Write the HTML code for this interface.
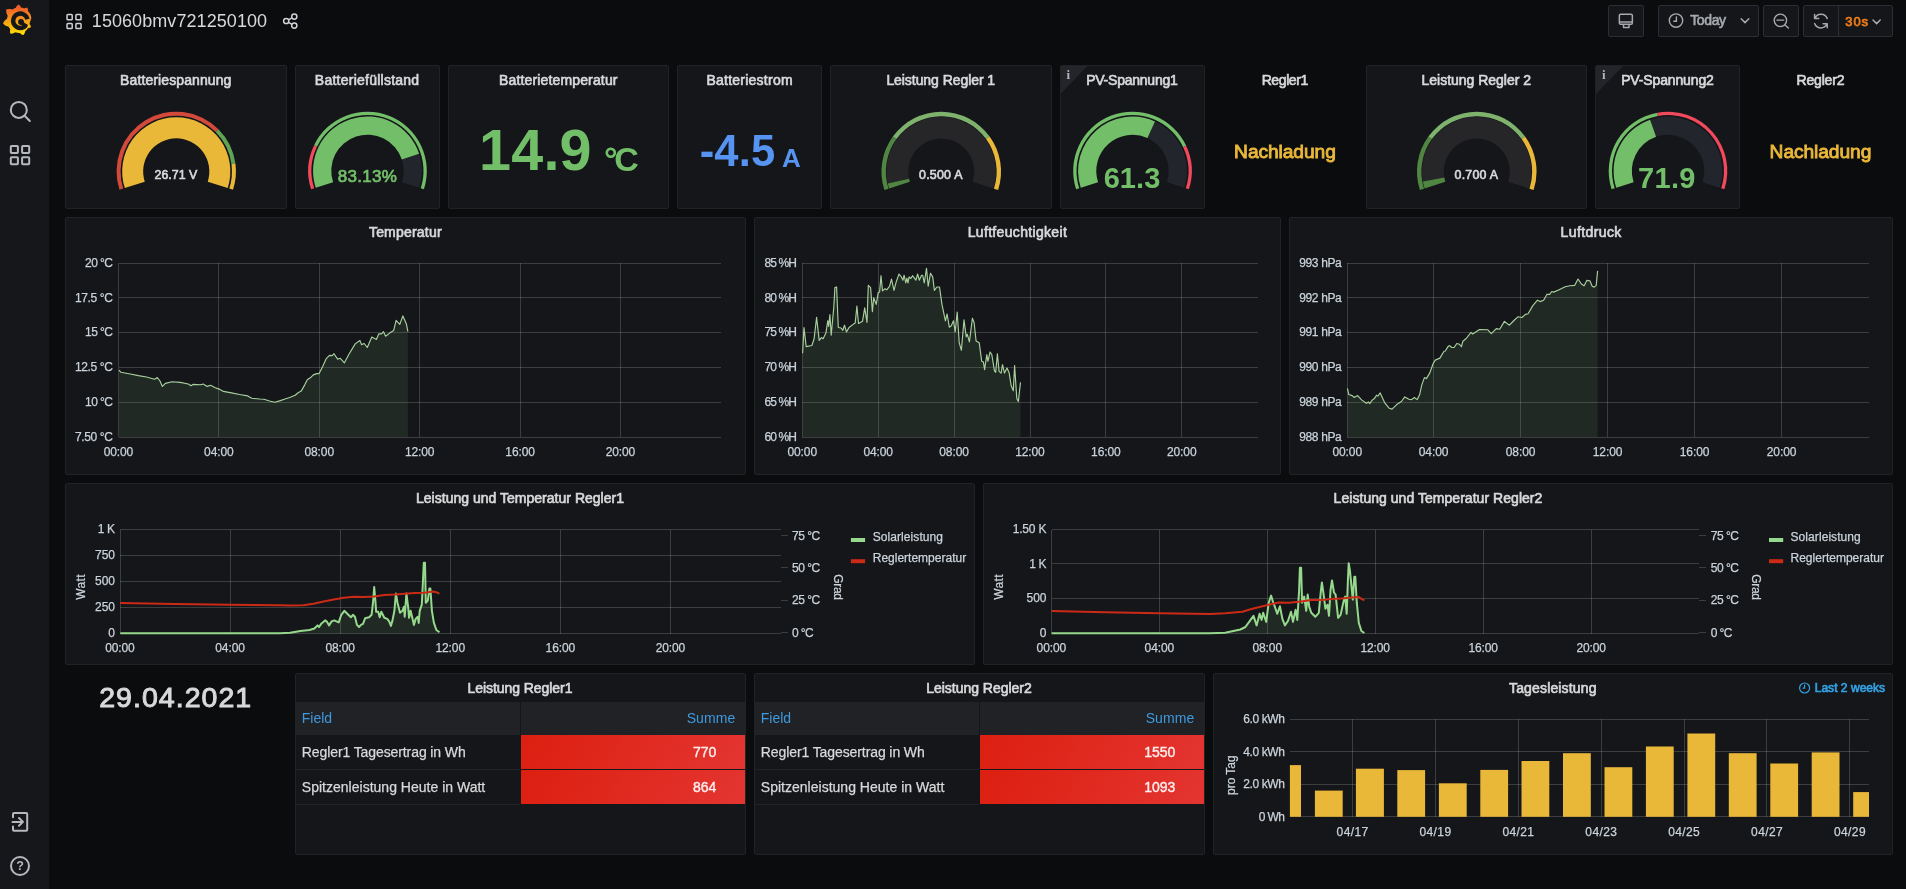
<!DOCTYPE html><html lang="de"><head><meta charset="utf-8"><title>15060bmv721250100 - Grafana</title><style>
html,body{margin:0;padding:0}
body{width:1906px;height:889px;overflow:hidden;background:#0b0c0e;font-family:"Liberation Sans",sans-serif;color:#d8d9da;position:relative}
.t{position:absolute;white-space:pre;line-height:1;display:block}
.sidemenu{position:absolute;left:0;top:0;width:49px;height:889px;background:#16171b}
.panel{position:absolute;box-sizing:border-box;background:#141619;border:1px solid #202226;border-radius:2px}
.panel.transparent{background:transparent;border-color:transparent}
.txtlayer{position:absolute;left:0;top:0;width:1906px;height:889px;will-change:transform}
.gfx{position:absolute;left:0;top:0;pointer-events:none}
.navbtn{position:absolute;top:5px;height:31.5px;box-sizing:border-box;background:#141619;border:1px solid #2c2e33;border-radius:2px}
.thead{position:absolute;background:#202226}
.cellred{position:absolute;background:linear-gradient(120deg,#dc1f10,#e43531)}
.rowline{position:absolute;height:1px;background:#202226}
</style></head><body><nav class="sidemenu"></nav><section class="panel" style="left:65.0px;top:65px;width:221.5px;height:144px"></section><section class="panel" style="left:294.5px;top:65px;width:145.0px;height:144px"></section><section class="panel" style="left:447.5px;top:65px;width:221.5px;height:144px"></section><section class="panel" style="left:677.0px;top:65px;width:145.0px;height:144px"></section><section class="panel" style="left:830.0px;top:65px;width:221.5px;height:144px"></section><section class="panel" style="left:1059.5px;top:65px;width:145.0px;height:144px"></section><section class="panel transparent" style="left:1212.5px;top:65px;width:145.0px;height:144px"></section><section class="panel" style="left:1365.5px;top:65px;width:221.5px;height:144px"></section><section class="panel" style="left:1595.0px;top:65px;width:145.0px;height:144px"></section><section class="panel transparent" style="left:1748.0px;top:65px;width:145.0px;height:144px"></section><section class="panel" style="left:65.0px;top:217px;width:680.5px;height:258px"></section><section class="panel" style="left:753.5px;top:217px;width:527.5px;height:258px"></section><section class="panel" style="left:1289.0px;top:217px;width:604.0px;height:258px"></section><section class="panel" style="left:65.0px;top:483px;width:910.0px;height:182px"></section><section class="panel" style="left:983.0px;top:483px;width:910.0px;height:182px"></section><section class="panel transparent" style="left:65.0px;top:673px;width:221.5px;height:182px"></section><section class="panel" style="left:294.5px;top:673px;width:451.0px;height:182px"></section><section class="panel" style="left:753.5px;top:673px;width:451.0px;height:182px"></section><section class="panel" style="left:1212.5px;top:673px;width:680.5px;height:182px"></section><div class="navbtn" style="left:1608.3px;width:35.4px"></div><div class="navbtn" style="left:1658.3px;width:100.5px"></div><div class="navbtn" style="left:1763.4px;width:35.3px"></div><div class="navbtn" style="left:1803.4px;width:89.4px"></div><div style="position:absolute;left:1838px;top:5px;width:1px;height:31.5px;background:#2c2e33"></div><div class="thead" style="left:295.5px;top:702px;width:449.0px;height:33px"></div><div style="position:absolute;left:520.0px;top:702px;width:1px;height:33px;background:#141619"></div><div class="cellred" style="left:520.5px;top:735.3px;width:224.0px;height:33.6px"></div><div class="rowline" style="left:295.5px;top:769.0px;width:224.5px"></div><div class="cellred" style="left:520.5px;top:770.0px;width:224.0px;height:33.6px"></div><div class="rowline" style="left:295.5px;top:803.7px;width:224.5px"></div><div class="thead" style="left:754.5px;top:702px;width:449.0px;height:33px"></div><div style="position:absolute;left:979.0px;top:702px;width:1px;height:33px;background:#141619"></div><div class="cellred" style="left:979.5px;top:735.3px;width:224.0px;height:33.6px"></div><div class="rowline" style="left:754.5px;top:769.0px;width:224.5px"></div><div class="cellred" style="left:979.5px;top:770.0px;width:224.0px;height:33.6px"></div><div class="rowline" style="left:754.5px;top:803.7px;width:224.5px"></div><svg class="gfx" width="1906" height="889" viewBox="0 0 1906 889"><defs><linearGradient id="glogo" gradientUnits="userSpaceOnUse" x1="175.5" y1="394" x2="175.5" y2="30"><stop offset="0" stop-color="#FFF100"/><stop offset="1" stop-color="#F05A28"/></linearGradient></defs><g transform="translate(2.4,4.3) scale(0.0845)"><path fill="url(#glogo)" d="M342,161.2c-0.6-6.1-1.600-13.100-3.600-20.900c-2-7.700-5-16.200-9.400-25c-4.400-8.800-10.100-17.900-17.500-26.800c-2.900-3.500-6.100-6.900-9.500-10.200c5.100-20.300-6.200-37.900-6.200-37.900c-19.500-1.200-31.900,6.100-36.500,9.400c-0.800-0.300-1.500-0.700-2.300-1c-3.300-1.300-6.700-2.600-10.300-3.700c-3.500-1.100-7.100-2.100-10.800-3c-3.700-0.900-7.400-1.600-11.200-2.200c-0.700-0.100-1.300-0.200-2-0.300c-8.500-27.200-32.900-38.600-32.900-38.600c-27.300,17.300-32.400,41.500-32.400,41.500s-0.100,0.500-0.300,1.400c-1.500,0.400-3,0.900-4.500,1.300c-2.100,0.600-4.200,1.400-6.200,2.200c-2.100,0.800-4.100,1.600-6.200,2.500c-4.100,1.800-8.200,3.800-12.200,6c-3.900,2.200-7.700,4.600-11.400,7.100c-0.500-0.200-1-0.400-1-0.400c-37.800-14.400-71.300,2.900-71.300,2.900c-3.100,40.200,15.100,65.500,18.700,70.100c-0.900,2.500-1.700,5-2.500,7.500c-2.800,9.100-4.900,18.400-6.200,28.100c-0.200,1.400-0.400,2.800-0.500,4.200c-35,17.300-45.300,52.600-45.300,52.600c29.100,33.500,63.100,35.600,63.100,35.600c0,0,0.100-0.100,0.100-0.100c4.300,7.700,9.300,15,14.900,21.900c2.400,2.900,4.800,5.600,7.400,8.300c-10.600,30.400,1.500,55.600,1.500,55.600c32.400,1.200,53.700-14.200,58.200-17.700c3.200,1.100,6.500,2.100,9.800,2.900c10,2.600,20.200,4.100,30.400,4.500c2.500,0.100,5.100,0.200,7.600,0.100l1.200,0l0.800,0l1.600,0l1.600-0.100l0,0.100c15.300,21.800,42.100,24.900,42.100,24.900c19.100-20.100,20.200-40.100,20.200-44.400l0,0c0,0,0-0.100,0-0.300c0-0.400,0-0.600,0-0.600l0,0c0-0.300,0-0.600,0-0.900c4-2.800,7.800-5.800,11.400-9.100c7.600-6.900,14.300-14.800,19.900-23.300c0.500-0.800,1-1.600,1.500-2.400c21.600,1.200,36.900-13.400,36.900-13.400c-3.600-22.500-16.400-33.500-19.100-35.600z"/></g><path d="M27.44 19.30A7.2 7.2 0 1 0 25.92 25.43" fill="none" stroke="#16171b" stroke-width="4.4"/><path d="M25.92 25.43Q24.5 25.5 21.6 22.6" fill="none" stroke="#16171b" stroke-width="3.6" stroke-linecap="round"/><circle cx="21.0" cy="22.0" r="2.9" fill="#16171b"/><circle cx="18.8" cy="109.9" r="8" fill="none" stroke="#b5b8be" stroke-width="2"/><path d="M24.6 115.8L29.8 121" stroke="#b5b8be" stroke-width="2" stroke-linecap="round"/><rect x="10.80" y="145.90" width="7.10" height="7.10" rx="0.8" fill="none" stroke="#b5b8be" stroke-width="2.0"/><rect x="10.80" y="157.20" width="7.10" height="7.10" rx="0.8" fill="none" stroke="#b5b8be" stroke-width="2.0"/><rect x="22.10" y="145.90" width="7.10" height="7.10" rx="0.8" fill="none" stroke="#b5b8be" stroke-width="2.0"/><rect x="22.10" y="157.20" width="7.10" height="7.10" rx="0.8" fill="none" stroke="#b5b8be" stroke-width="2.0"/><path d="M19 813.1H26.2Q27.2 813.1 27.2 814.1V829.7Q27.2 830.7 26.2 830.7H14Q13 830.7 13 829.7V826.5M13 817.3V814.1Q13 813.1 14 813.1H19" fill="none" stroke="#b5b8be" stroke-width="2" stroke-linecap="round"/><path d="M12.5 821.9H22.5M19 818L23 821.9L19 825.8" fill="none" stroke="#b5b8be" stroke-width="2" stroke-linecap="round" stroke-linejoin="round"/><circle cx="20" cy="866" r="9" fill="none" stroke="#b5b8be" stroke-width="2"/><rect x="67.05" y="14.55" width="5.15" height="5.15" rx="0.8" fill="none" stroke="#d0d2d6" stroke-width="1.5"/><rect x="67.05" y="23.40" width="5.15" height="5.15" rx="0.8" fill="none" stroke="#d0d2d6" stroke-width="1.5"/><rect x="75.90" y="14.55" width="5.15" height="5.15" rx="0.8" fill="none" stroke="#d0d2d6" stroke-width="1.5"/><rect x="75.90" y="23.40" width="5.15" height="5.15" rx="0.8" fill="none" stroke="#d0d2d6" stroke-width="1.5"/><g fill="none" stroke="#d0d2d6" stroke-width="1.5"><circle cx="294.3" cy="16.6" r="2.6"/><circle cx="286.2" cy="21" r="2.6"/><circle cx="294.3" cy="25.6" r="2.6"/><path d="M288.5 19.8L292 17.9M288.5 22.3L292 24.3"/></g><g fill="none" stroke="#a6a9ae" stroke-width="1.5" stroke-linejoin="round"><rect x="1619.35" y="14.3" width="13.0" height="9.9" rx="1.3"/><path d="M1619.4 21.9H1632.3M1623.5 24.6V27.4H1629V24.6"/></g><g fill="none" stroke="#a6a9ae" stroke-width="1.4" stroke-linecap="round"><circle cx="1676" cy="20.6" r="6.7"/><path d="M1676.4 17V21.3H1673.8"/></g><path d="M1741.2 18.8L1745 22.6L1748.8 18.8" fill="none" stroke="#a6a9ae" stroke-width="1.5" stroke-linecap="round" stroke-linejoin="round"/><path d="M1873 20L1876.6 23.6L1880.2 20" fill="none" stroke="#a6a9ae" stroke-width="1.5" stroke-linecap="round" stroke-linejoin="round"/><g fill="none" stroke="#a6a9ae" stroke-width="1.4" stroke-linecap="round"><circle cx="1780.4" cy="20.3" r="6.2"/><path d="M1785 24.9L1788.4 28M1776.9 20.1H1783.7"/></g><g fill="none" stroke="#a6a9ae" stroke-width="1.5" stroke-linecap="round" stroke-linejoin="round"><path d="M1827.2 18.6A6.6 6.6 0 0 0 1815 18.2M1814.6 14.4V18.5H1818.7"/><path d="M1814.6 23.6A6.6 6.6 0 0 0 1826.8 24M1827.2 27.8V23.7H1823.1"/></g><g fill="none" stroke="#33a2e5" stroke-width="1.2" stroke-linecap="round"><circle cx="1804.6" cy="688" r="5"/><path d="M1804.6 685V688.2H1803"/></g><path d="M119.47 189.85A59.70 59.70 0 0 1 218.41 129.13L215.59 131.96A55.70 55.70 0 0 0 123.28 188.61Z" fill="#d44a3a"/><path d="M218.41 129.13A59.70 59.70 0 0 1 235.44 163.62L231.48 164.14A55.70 55.70 0 0 0 215.59 131.96Z" fill="#5fa354"/><path d="M235.44 163.62A59.70 59.70 0 0 1 233.03 189.85L229.22 188.61A55.70 55.70 0 0 0 231.48 164.14Z" fill="#EAB839"/><path d="M124.80 188.12A54.10 54.10 0 1 1 227.70 188.12L207.73 181.63A33.10 33.10 0 1 0 144.77 181.63Z" fill="#EAB839"/><path d="M311.10 189.32A59.30 59.30 0 0 1 314.13 145.15L317.10 146.58A56.00 56.00 0 0 0 314.24 188.30Z" fill="#F2495C"/><path d="M314.13 145.15A59.30 59.30 0 0 1 423.90 189.32L420.76 188.30A56.00 56.00 0 0 0 317.10 146.58Z" fill="#73BF69"/><path d="M419.11 153.79A54.40 54.40 0 0 1 419.24 187.81L401.93 182.19A36.20 36.20 0 0 0 401.84 159.55Z" fill="#22252b"/><path d="M315.76 187.81A54.40 54.40 0 0 1 419.11 153.79L401.84 159.55A36.20 36.20 0 0 0 333.07 182.19Z" fill="#73BF69"/><path d="M884.38 190.08A59.80 59.80 0 0 1 892.87 136.45L896.43 139.04A55.40 55.40 0 0 0 888.56 188.72Z" fill="#508642"/><path d="M892.87 136.45A59.80 59.80 0 0 1 989.63 136.45L986.07 139.04A55.40 55.40 0 0 0 896.43 139.04Z" fill="#7EB26D"/><path d="M989.63 136.45A59.80 59.80 0 0 1 998.12 190.08L993.94 188.72A55.40 55.40 0 0 0 986.07 139.04Z" fill="#EAB839"/><path d="M887.77 183.55A54.80 54.80 0 1 1 993.37 188.53L972.63 181.80A33.00 33.00 0 1 0 909.04 178.80Z" fill="#262628"/><path d="M889.13 188.53A54.80 54.80 0 0 1 887.77 183.55L909.04 178.80A33.00 33.00 0 0 0 909.87 181.80Z" fill="#508642"/><path d="M1076.10 189.32A59.30 59.30 0 0 1 1186.16 145.75L1183.17 147.16A56.00 56.00 0 0 0 1079.24 188.30Z" fill="#73BF69"/><path d="M1186.16 145.75A59.30 59.30 0 0 1 1188.90 189.32L1185.76 188.30A56.00 56.00 0 0 0 1183.17 147.16Z" fill="#F2495C"/><path d="M1154.98 121.46A54.40 54.40 0 0 1 1184.24 187.81L1166.93 182.19A36.20 36.20 0 0 0 1147.46 138.04Z" fill="#22252b"/><path d="M1080.76 187.81A54.40 54.40 0 0 1 1154.98 121.46L1147.46 138.04A36.20 36.20 0 0 0 1098.07 182.19Z" fill="#73BF69"/><path d="M1419.88 190.08A59.80 59.80 0 0 1 1428.37 136.45L1431.93 139.04A55.40 55.40 0 0 0 1424.06 188.72Z" fill="#508642"/><path d="M1428.37 136.45A59.80 59.80 0 0 1 1525.13 136.45L1521.57 139.04A55.40 55.40 0 0 0 1431.93 139.04Z" fill="#7EB26D"/><path d="M1525.13 136.45A59.80 59.80 0 0 1 1533.62 190.08L1529.44 188.72A55.40 55.40 0 0 0 1521.57 139.04Z" fill="#EAB839"/><path d="M1422.86 181.53A54.80 54.80 0 1 1 1528.87 188.53L1508.13 181.80A33.00 33.00 0 1 0 1444.30 177.58Z" fill="#262628"/><path d="M1424.63 188.53A54.80 54.80 0 0 1 1422.86 181.53L1444.30 177.58A33.00 33.00 0 0 0 1445.37 181.80Z" fill="#508642"/><path d="M1611.60 189.32A59.30 59.30 0 0 1 1657.33 112.67L1657.92 115.91A56.00 56.00 0 0 0 1614.74 188.30Z" fill="#73BF69"/><path d="M1657.33 112.67A59.30 59.30 0 0 1 1724.40 189.32L1721.26 188.30A56.00 56.00 0 0 0 1657.92 115.91Z" fill="#F2495C"/><path d="M1650.09 119.63A54.40 54.40 0 0 1 1719.74 187.81L1702.43 182.19A36.20 36.20 0 0 0 1656.08 136.82Z" fill="#22252b"/><path d="M1616.26 187.81A54.40 54.40 0 0 1 1650.09 119.63L1656.08 136.82A36.20 36.20 0 0 0 1633.57 182.19Z" fill="#73BF69"/><path d="M1060.5 66H1087.5L1060.5 94Z" fill="#23252a"/><path d="M1596.0 66H1623.0L1596.0 94Z" fill="#23252a"/><line x1="118.5" x2="720.9" y1="263.5" y2="263.5" stroke="#c8c8c8" stroke-opacity="0.22" stroke-width="1" shape-rendering="crispEdges"/><line x1="118.5" x2="720.9" y1="297.5" y2="297.5" stroke="#c8c8c8" stroke-opacity="0.22" stroke-width="1" shape-rendering="crispEdges"/><line x1="118.5" x2="720.9" y1="332.5" y2="332.5" stroke="#c8c8c8" stroke-opacity="0.22" stroke-width="1" shape-rendering="crispEdges"/><line x1="118.5" x2="720.9" y1="367.5" y2="367.5" stroke="#c8c8c8" stroke-opacity="0.22" stroke-width="1" shape-rendering="crispEdges"/><line x1="118.5" x2="720.9" y1="402.5" y2="402.5" stroke="#c8c8c8" stroke-opacity="0.22" stroke-width="1" shape-rendering="crispEdges"/><line x1="118.5" x2="720.9" y1="437.5" y2="437.5" stroke="#c8c8c8" stroke-opacity="0.22" stroke-width="1" shape-rendering="crispEdges"/><line x1="118.5" x2="118.5" y1="263.0" y2="437.0" stroke="#c8c8c8" stroke-opacity="0.22" stroke-width="1" shape-rendering="crispEdges"/><line x1="218.5" x2="218.5" y1="263.0" y2="437.0" stroke="#c8c8c8" stroke-opacity="0.22" stroke-width="1" shape-rendering="crispEdges"/><line x1="319.5" x2="319.5" y1="263.0" y2="437.0" stroke="#c8c8c8" stroke-opacity="0.22" stroke-width="1" shape-rendering="crispEdges"/><line x1="419.5" x2="419.5" y1="263.0" y2="437.0" stroke="#c8c8c8" stroke-opacity="0.22" stroke-width="1" shape-rendering="crispEdges"/><line x1="520.5" x2="520.5" y1="263.0" y2="437.0" stroke="#c8c8c8" stroke-opacity="0.22" stroke-width="1" shape-rendering="crispEdges"/><line x1="620.5" x2="620.5" y1="263.0" y2="437.0" stroke="#c8c8c8" stroke-opacity="0.22" stroke-width="1" shape-rendering="crispEdges"/><polygon points="118.9,370.2 120.8,372.2 130.3,374.0 138.4,375.6 146.5,377.0 154.6,379.3 157.3,377.6 160.0,381.0 162.4,386.4 165.4,383.4 172.1,381.7 180.2,382.4 188.3,384.0 191.0,385.7 193.0,384.4 200.5,384.8 203.2,384.0 207.2,386.4 210.6,385.3 215.3,387.8 219.1,389.1 223.4,391.4 231.5,392.9 239.6,394.5 247.7,395.9 251.8,398.3 259.9,399.0 264.0,399.2 269.5,401.0 274.9,402.3 280.3,400.6 284.3,399.2 289.7,397.5 295.1,395.2 298.5,392.5 301.2,391.1 304.6,385.1 307.3,379.7 310.6,377.6 313.3,374.9 316.7,373.6 319.1,373.6 322.8,366.2 326.2,358.7 329.5,355.4 332.2,355.6 334.0,353.7 337.6,359.1 340.3,358.3 344.4,362.8 349.1,354.0 355.2,343.9 359.9,340.5 361.5,344.6 364.2,343.5 367.3,347.5 371.8,337.1 376.4,339.4 378.8,333.8 381.5,333.8 383.5,331.7 385.6,336.2 389.6,333.1 393.7,330.4 396.1,320.3 399.8,324.3 402.9,315.9 406.5,324.3 407.9,331.7 407.9,437.0 118.9,437.0" fill="#96D98D" fill-opacity="0.1"/><polyline points="118.9,370.2 120.8,372.2 130.3,374.0 138.4,375.6 146.5,377.0 154.6,379.3 157.3,377.6 160.0,381.0 162.4,386.4 165.4,383.4 172.1,381.7 180.2,382.4 188.3,384.0 191.0,385.7 193.0,384.4 200.5,384.8 203.2,384.0 207.2,386.4 210.6,385.3 215.3,387.8 219.1,389.1 223.4,391.4 231.5,392.9 239.6,394.5 247.7,395.9 251.8,398.3 259.9,399.0 264.0,399.2 269.5,401.0 274.9,402.3 280.3,400.6 284.3,399.2 289.7,397.5 295.1,395.2 298.5,392.5 301.2,391.1 304.6,385.1 307.3,379.7 310.6,377.6 313.3,374.9 316.7,373.6 319.1,373.6 322.8,366.2 326.2,358.7 329.5,355.4 332.2,355.6 334.0,353.7 337.6,359.1 340.3,358.3 344.4,362.8 349.1,354.0 355.2,343.9 359.9,340.5 361.5,344.6 364.2,343.5 367.3,347.5 371.8,337.1 376.4,339.4 378.8,333.8 381.5,333.8 383.5,331.7 385.6,336.2 389.6,333.1 393.7,330.4 396.1,320.3 399.8,324.3 402.9,315.9 406.5,324.3 407.9,331.7" fill="none" stroke="#a8d09d" stroke-width="1.15" stroke-linejoin="round"/><line x1="802.3" x2="1257.6" y1="263.5" y2="263.5" stroke="#c8c8c8" stroke-opacity="0.22" stroke-width="1" shape-rendering="crispEdges"/><line x1="802.3" x2="1257.6" y1="297.5" y2="297.5" stroke="#c8c8c8" stroke-opacity="0.22" stroke-width="1" shape-rendering="crispEdges"/><line x1="802.3" x2="1257.6" y1="332.5" y2="332.5" stroke="#c8c8c8" stroke-opacity="0.22" stroke-width="1" shape-rendering="crispEdges"/><line x1="802.3" x2="1257.6" y1="367.5" y2="367.5" stroke="#c8c8c8" stroke-opacity="0.22" stroke-width="1" shape-rendering="crispEdges"/><line x1="802.3" x2="1257.6" y1="402.5" y2="402.5" stroke="#c8c8c8" stroke-opacity="0.22" stroke-width="1" shape-rendering="crispEdges"/><line x1="802.3" x2="1257.6" y1="437.5" y2="437.5" stroke="#c8c8c8" stroke-opacity="0.22" stroke-width="1" shape-rendering="crispEdges"/><line x1="802.5" x2="802.5" y1="263.0" y2="437.0" stroke="#c8c8c8" stroke-opacity="0.22" stroke-width="1" shape-rendering="crispEdges"/><line x1="878.5" x2="878.5" y1="263.0" y2="437.0" stroke="#c8c8c8" stroke-opacity="0.22" stroke-width="1" shape-rendering="crispEdges"/><line x1="954.5" x2="954.5" y1="263.0" y2="437.0" stroke="#c8c8c8" stroke-opacity="0.22" stroke-width="1" shape-rendering="crispEdges"/><line x1="1030.5" x2="1030.5" y1="263.0" y2="437.0" stroke="#c8c8c8" stroke-opacity="0.22" stroke-width="1" shape-rendering="crispEdges"/><line x1="1105.5" x2="1105.5" y1="263.0" y2="437.0" stroke="#c8c8c8" stroke-opacity="0.22" stroke-width="1" shape-rendering="crispEdges"/><line x1="1181.5" x2="1181.5" y1="263.0" y2="437.0" stroke="#c8c8c8" stroke-opacity="0.22" stroke-width="1" shape-rendering="crispEdges"/><polygon points="802.6,353.3 804.0,327.5 806.2,346.6 811.9,345.5 814.1,338.7 816.6,317.4 819.2,340.4 821.4,337.6 823.1,338.7 825.9,333.1 827.8,320.7 828.7,326.4 829.9,314.5 831.2,335.3 833.8,307.2 834.9,287.6 836.6,287.0 838.3,327.5 841.1,328.0 842.8,330.3 844.5,325.2 846.5,332.0 849.0,327.5 853.5,324.1 855.2,323.0 856.9,306.1 858.5,323.5 862.5,321.3 864.7,307.8 867.0,322.4 868.3,285.3 870.6,287.6 872.4,311.7 873.7,297.7 876.2,304.4 878.2,292.6 879.6,292.0 881.0,275.7 882.5,290.9 885.0,288.7 886.7,289.8 889.5,286.4 891.5,279.1 894.0,290.4 896.2,281.9 899.0,274.0 901.3,276.9 903.0,280.2 904.1,275.2 905.8,283.0 906.9,278.0 908.0,283.0 909.1,276.9 910.8,278.5 912.5,275.7 915.9,280.2 917.6,274.0 919.3,280.2 921.5,275.2 922.6,275.2 924.3,282.8 926.5,268.4 928.2,286.2 930.5,273.2 932.7,276.9 934.4,290.4 936.9,287.0 939.5,287.0 942.0,304.7 945.4,320.8 947.1,314.0 949.3,327.2 951.3,325.8 953.5,320.8 955.2,331.8 957.2,312.0 959.2,342.7 961.4,350.3 964.0,319.9 966.2,336.8 967.3,334.3 969.4,341.9 972.4,318.2 974.1,322.5 976.1,341.0 979.2,342.7 981.7,361.3 983.4,362.1 984.6,369.7 986.8,354.5 987.9,361.3 990.1,352.0 991.8,354.5 994.4,370.6 995.7,372.3 997.4,353.7 999.1,371.4 1001.1,373.1 1002.5,364.7 1004.5,373.1 1007.0,368.0 1009.2,373.1 1011.2,385.8 1013.3,390.8 1014.6,365.5 1016.8,398.4 1018.3,401.5 1020.5,382.4 1020.5,437.0 802.6,437.0" fill="#96D98D" fill-opacity="0.1"/><polyline points="802.6,353.3 804.0,327.5 806.2,346.6 811.9,345.5 814.1,338.7 816.6,317.4 819.2,340.4 821.4,337.6 823.1,338.7 825.9,333.1 827.8,320.7 828.7,326.4 829.9,314.5 831.2,335.3 833.8,307.2 834.9,287.6 836.6,287.0 838.3,327.5 841.1,328.0 842.8,330.3 844.5,325.2 846.5,332.0 849.0,327.5 853.5,324.1 855.2,323.0 856.9,306.1 858.5,323.5 862.5,321.3 864.7,307.8 867.0,322.4 868.3,285.3 870.6,287.6 872.4,311.7 873.7,297.7 876.2,304.4 878.2,292.6 879.6,292.0 881.0,275.7 882.5,290.9 885.0,288.7 886.7,289.8 889.5,286.4 891.5,279.1 894.0,290.4 896.2,281.9 899.0,274.0 901.3,276.9 903.0,280.2 904.1,275.2 905.8,283.0 906.9,278.0 908.0,283.0 909.1,276.9 910.8,278.5 912.5,275.7 915.9,280.2 917.6,274.0 919.3,280.2 921.5,275.2 922.6,275.2 924.3,282.8 926.5,268.4 928.2,286.2 930.5,273.2 932.7,276.9 934.4,290.4 936.9,287.0 939.5,287.0 942.0,304.7 945.4,320.8 947.1,314.0 949.3,327.2 951.3,325.8 953.5,320.8 955.2,331.8 957.2,312.0 959.2,342.7 961.4,350.3 964.0,319.9 966.2,336.8 967.3,334.3 969.4,341.9 972.4,318.2 974.1,322.5 976.1,341.0 979.2,342.7 981.7,361.3 983.4,362.1 984.6,369.7 986.8,354.5 987.9,361.3 990.1,352.0 991.8,354.5 994.4,370.6 995.7,372.3 997.4,353.7 999.1,371.4 1001.1,373.1 1002.5,364.7 1004.5,373.1 1007.0,368.0 1009.2,373.1 1011.2,385.8 1013.3,390.8 1014.6,365.5 1016.8,398.4 1018.3,401.5 1020.5,382.4" fill="none" stroke="#a8d09d" stroke-width="1.15" stroke-linejoin="round"/><line x1="1347.3" x2="1869.3" y1="263.5" y2="263.5" stroke="#c8c8c8" stroke-opacity="0.22" stroke-width="1" shape-rendering="crispEdges"/><line x1="1347.3" x2="1869.3" y1="297.5" y2="297.5" stroke="#c8c8c8" stroke-opacity="0.22" stroke-width="1" shape-rendering="crispEdges"/><line x1="1347.3" x2="1869.3" y1="332.5" y2="332.5" stroke="#c8c8c8" stroke-opacity="0.22" stroke-width="1" shape-rendering="crispEdges"/><line x1="1347.3" x2="1869.3" y1="367.5" y2="367.5" stroke="#c8c8c8" stroke-opacity="0.22" stroke-width="1" shape-rendering="crispEdges"/><line x1="1347.3" x2="1869.3" y1="402.5" y2="402.5" stroke="#c8c8c8" stroke-opacity="0.22" stroke-width="1" shape-rendering="crispEdges"/><line x1="1347.3" x2="1869.3" y1="437.5" y2="437.5" stroke="#c8c8c8" stroke-opacity="0.22" stroke-width="1" shape-rendering="crispEdges"/><line x1="1347.5" x2="1347.5" y1="263.0" y2="437.0" stroke="#c8c8c8" stroke-opacity="0.22" stroke-width="1" shape-rendering="crispEdges"/><line x1="1433.5" x2="1433.5" y1="263.0" y2="437.0" stroke="#c8c8c8" stroke-opacity="0.22" stroke-width="1" shape-rendering="crispEdges"/><line x1="1520.5" x2="1520.5" y1="263.0" y2="437.0" stroke="#c8c8c8" stroke-opacity="0.22" stroke-width="1" shape-rendering="crispEdges"/><line x1="1607.5" x2="1607.5" y1="263.0" y2="437.0" stroke="#c8c8c8" stroke-opacity="0.22" stroke-width="1" shape-rendering="crispEdges"/><line x1="1694.5" x2="1694.5" y1="263.0" y2="437.0" stroke="#c8c8c8" stroke-opacity="0.22" stroke-width="1" shape-rendering="crispEdges"/><line x1="1781.5" x2="1781.5" y1="263.0" y2="437.0" stroke="#c8c8c8" stroke-opacity="0.22" stroke-width="1" shape-rendering="crispEdges"/><polygon points="1347.4,388.4 1348.8,394.5 1352.2,395.6 1354.2,397.5 1357.6,395.6 1361.6,399.9 1366.3,403.3 1368.4,401.9 1369.7,403.7 1372.4,399.9 1374.4,398.6 1376.5,395.2 1377.8,396.1 1380.2,392.9 1384.6,402.6 1389.3,408.3 1392.0,409.1 1396.7,404.6 1401.4,401.5 1404.8,396.9 1408.9,399.2 1411.6,399.6 1414.3,397.5 1417.2,399.6 1419.7,394.5 1421.7,385.1 1424.4,377.6 1426.4,378.6 1429.8,372.9 1433.2,363.5 1435.2,360.1 1439.9,358.1 1444.0,351.3 1445.3,351.0 1448.0,346.6 1449.6,345.6 1451.8,347.5 1454.1,347.5 1456.8,343.5 1459.5,344.3 1461.5,346.6 1462.9,341.2 1466.2,338.5 1471.0,332.4 1472.7,334.0 1479.5,329.5 1487.6,329.7 1491.3,333.6 1496.3,328.6 1499.7,329.3 1504.4,321.4 1509.4,325.2 1513.9,320.5 1517.9,316.8 1522.0,317.5 1525.4,314.4 1528.1,313.7 1532.8,305.6 1537.5,300.2 1540.2,301.6 1543.6,300.2 1547.0,294.2 1549.7,294.4 1551.7,291.5 1553.7,292.1 1559.1,289.8 1565.2,286.7 1569.9,285.8 1574.6,285.4 1578.0,279.0 1581.4,284.0 1584.1,285.8 1586.8,280.4 1589.9,280.7 1592.2,286.3 1594.2,287.1 1596.2,285.4 1597.6,270.9 1597.6,437.0 1347.4,437.0" fill="#96D98D" fill-opacity="0.1"/><polyline points="1347.4,388.4 1348.8,394.5 1352.2,395.6 1354.2,397.5 1357.6,395.6 1361.6,399.9 1366.3,403.3 1368.4,401.9 1369.7,403.7 1372.4,399.9 1374.4,398.6 1376.5,395.2 1377.8,396.1 1380.2,392.9 1384.6,402.6 1389.3,408.3 1392.0,409.1 1396.7,404.6 1401.4,401.5 1404.8,396.9 1408.9,399.2 1411.6,399.6 1414.3,397.5 1417.2,399.6 1419.7,394.5 1421.7,385.1 1424.4,377.6 1426.4,378.6 1429.8,372.9 1433.2,363.5 1435.2,360.1 1439.9,358.1 1444.0,351.3 1445.3,351.0 1448.0,346.6 1449.6,345.6 1451.8,347.5 1454.1,347.5 1456.8,343.5 1459.5,344.3 1461.5,346.6 1462.9,341.2 1466.2,338.5 1471.0,332.4 1472.7,334.0 1479.5,329.5 1487.6,329.7 1491.3,333.6 1496.3,328.6 1499.7,329.3 1504.4,321.4 1509.4,325.2 1513.9,320.5 1517.9,316.8 1522.0,317.5 1525.4,314.4 1528.1,313.7 1532.8,305.6 1537.5,300.2 1540.2,301.6 1543.6,300.2 1547.0,294.2 1549.7,294.4 1551.7,291.5 1553.7,292.1 1559.1,289.8 1565.2,286.7 1569.9,285.8 1574.6,285.4 1578.0,279.0 1581.4,284.0 1584.1,285.8 1586.8,280.4 1589.9,280.7 1592.2,286.3 1594.2,287.1 1596.2,285.4 1597.6,270.9" fill="none" stroke="#a8d09d" stroke-width="1.15" stroke-linejoin="round"/><line x1="120.3" x2="781.0" y1="529.5" y2="529.5" stroke="#c8c8c8" stroke-opacity="0.22" stroke-width="1" shape-rendering="crispEdges"/><line x1="120.3" x2="781.0" y1="555.5" y2="555.5" stroke="#c8c8c8" stroke-opacity="0.22" stroke-width="1" shape-rendering="crispEdges"/><line x1="120.3" x2="781.0" y1="581.5" y2="581.5" stroke="#c8c8c8" stroke-opacity="0.22" stroke-width="1" shape-rendering="crispEdges"/><line x1="120.3" x2="781.0" y1="607.5" y2="607.5" stroke="#c8c8c8" stroke-opacity="0.22" stroke-width="1" shape-rendering="crispEdges"/><line x1="120.3" x2="781.0" y1="633.5" y2="633.5" stroke="#c8c8c8" stroke-opacity="0.22" stroke-width="1" shape-rendering="crispEdges"/><line x1="120.5" x2="120.5" y1="529.5" y2="633.5" stroke="#c8c8c8" stroke-opacity="0.22" stroke-width="1" shape-rendering="crispEdges"/><line x1="230.5" x2="230.5" y1="529.5" y2="633.5" stroke="#c8c8c8" stroke-opacity="0.22" stroke-width="1" shape-rendering="crispEdges"/><line x1="340.5" x2="340.5" y1="529.5" y2="633.5" stroke="#c8c8c8" stroke-opacity="0.22" stroke-width="1" shape-rendering="crispEdges"/><line x1="450.5" x2="450.5" y1="529.5" y2="633.5" stroke="#c8c8c8" stroke-opacity="0.22" stroke-width="1" shape-rendering="crispEdges"/><line x1="560.5" x2="560.5" y1="529.5" y2="633.5" stroke="#c8c8c8" stroke-opacity="0.22" stroke-width="1" shape-rendering="crispEdges"/><line x1="670.5" x2="670.5" y1="529.5" y2="633.5" stroke="#c8c8c8" stroke-opacity="0.22" stroke-width="1" shape-rendering="crispEdges"/><line x1="781.0" x2="788.0" y1="535.5" y2="535.5" stroke="#c8c8c8" stroke-opacity="0.22" stroke-width="1" shape-rendering="crispEdges"/><line x1="781.0" x2="788.0" y1="567.5" y2="567.5" stroke="#c8c8c8" stroke-opacity="0.22" stroke-width="1" shape-rendering="crispEdges"/><line x1="781.0" x2="788.0" y1="600.5" y2="600.5" stroke="#c8c8c8" stroke-opacity="0.22" stroke-width="1" shape-rendering="crispEdges"/><line x1="781.0" x2="788.0" y1="632.5" y2="632.5" stroke="#c8c8c8" stroke-opacity="0.22" stroke-width="1" shape-rendering="crispEdges"/><polygon points="120.3,633.2 280.0,633.2 290.1,632.8 300.3,631.0 309.4,630.0 314.4,628.5 317.5,625.4 319.0,627.0 321.5,623.4 325.1,620.4 327.1,621.9 329.1,625.4 331.6,621.4 334.2,620.4 338.7,622.4 341.3,614.8 344.3,610.8 347.3,613.8 350.9,617.3 352.9,614.8 354.9,616.8 357.0,624.9 359.0,627.0 361.0,624.9 363.0,623.9 365.1,618.3 367.1,617.8 369.1,617.3 371.6,614.8 373.2,600.6 374.2,587.0 375.2,598.6 376.2,611.8 378.2,611.8 379.7,617.3 381.3,611.8 382.8,614.8 384.3,617.8 387.3,618.9 389.4,621.9 390.9,625.9 392.4,620.9 394.4,610.8 395.9,593.5 397.5,602.7 400.0,612.8 402.5,610.8 404.0,606.7 404.7,616.8 406.4,593.5 408.1,606.7 409.1,617.8 410.6,610.8 412.6,618.9 413.9,624.9 415.7,618.9 417.7,616.8 418.7,622.9 419.7,610.8 421.8,604.7 423.0,580.4 423.8,562.7 425.0,562.7 425.8,602.7 427.8,600.6 429.4,588.5 430.4,588.5 431.9,610.8 433.9,622.9 436.4,630.0 439.5,632.2 439.5,633.5 120.3,633.5" fill="#96D98D" fill-opacity="0.1"/><polyline points="120.3,633.2 280.0,633.2 290.1,632.8 300.3,631.0 309.4,630.0 314.4,628.5 317.5,625.4 319.0,627.0 321.5,623.4 325.1,620.4 327.1,621.9 329.1,625.4 331.6,621.4 334.2,620.4 338.7,622.4 341.3,614.8 344.3,610.8 347.3,613.8 350.9,617.3 352.9,614.8 354.9,616.8 357.0,624.9 359.0,627.0 361.0,624.9 363.0,623.9 365.1,618.3 367.1,617.8 369.1,617.3 371.6,614.8 373.2,600.6 374.2,587.0 375.2,598.6 376.2,611.8 378.2,611.8 379.7,617.3 381.3,611.8 382.8,614.8 384.3,617.8 387.3,618.9 389.4,621.9 390.9,625.9 392.4,620.9 394.4,610.8 395.9,593.5 397.5,602.7 400.0,612.8 402.5,610.8 404.0,606.7 404.7,616.8 406.4,593.5 408.1,606.7 409.1,617.8 410.6,610.8 412.6,618.9 413.9,624.9 415.7,618.9 417.7,616.8 418.7,622.9 419.7,610.8 421.8,604.7 423.0,580.4 423.8,562.7 425.0,562.7 425.8,602.7 427.8,600.6 429.4,588.5 430.4,588.5 431.9,610.8 433.9,622.9 436.4,630.0 439.5,632.2" fill="none" stroke="#96D98D" stroke-width="2" stroke-linejoin="round"/><polyline points="120.0,603.0 175.0,604.0 230.0,604.8 280.0,605.2 290.1,605.5 303.3,605.2 313.4,603.7 323.5,601.6 333.7,599.6 343.8,597.8 353.9,596.8 364.0,597.1 374.2,596.6 384.3,595.1 394.4,594.6 404.5,593.7 414.7,593.0 424.8,592.7 432.9,591.5 436.4,592.3 439.5,593.7" fill="none" stroke="#cb2a17" stroke-width="2" stroke-linejoin="round"/><line x1="1051.6" x2="1699.0" y1="529.5" y2="529.5" stroke="#c8c8c8" stroke-opacity="0.22" stroke-width="1" shape-rendering="crispEdges"/><line x1="1051.6" x2="1699.0" y1="563.5" y2="563.5" stroke="#c8c8c8" stroke-opacity="0.22" stroke-width="1" shape-rendering="crispEdges"/><line x1="1051.6" x2="1699.0" y1="598.5" y2="598.5" stroke="#c8c8c8" stroke-opacity="0.22" stroke-width="1" shape-rendering="crispEdges"/><line x1="1051.6" x2="1699.0" y1="633.5" y2="633.5" stroke="#c8c8c8" stroke-opacity="0.22" stroke-width="1" shape-rendering="crispEdges"/><line x1="1051.5" x2="1051.5" y1="529.5" y2="633.5" stroke="#c8c8c8" stroke-opacity="0.22" stroke-width="1" shape-rendering="crispEdges"/><line x1="1159.5" x2="1159.5" y1="529.5" y2="633.5" stroke="#c8c8c8" stroke-opacity="0.22" stroke-width="1" shape-rendering="crispEdges"/><line x1="1267.5" x2="1267.5" y1="529.5" y2="633.5" stroke="#c8c8c8" stroke-opacity="0.22" stroke-width="1" shape-rendering="crispEdges"/><line x1="1375.5" x2="1375.5" y1="529.5" y2="633.5" stroke="#c8c8c8" stroke-opacity="0.22" stroke-width="1" shape-rendering="crispEdges"/><line x1="1483.5" x2="1483.5" y1="529.5" y2="633.5" stroke="#c8c8c8" stroke-opacity="0.22" stroke-width="1" shape-rendering="crispEdges"/><line x1="1591.5" x2="1591.5" y1="529.5" y2="633.5" stroke="#c8c8c8" stroke-opacity="0.22" stroke-width="1" shape-rendering="crispEdges"/><line x1="1699.0" x2="1706.0" y1="535.5" y2="535.5" stroke="#c8c8c8" stroke-opacity="0.22" stroke-width="1" shape-rendering="crispEdges"/><line x1="1699.0" x2="1706.0" y1="567.5" y2="567.5" stroke="#c8c8c8" stroke-opacity="0.22" stroke-width="1" shape-rendering="crispEdges"/><line x1="1699.0" x2="1706.0" y1="600.5" y2="600.5" stroke="#c8c8c8" stroke-opacity="0.22" stroke-width="1" shape-rendering="crispEdges"/><line x1="1699.0" x2="1706.0" y1="632.5" y2="632.5" stroke="#c8c8c8" stroke-opacity="0.22" stroke-width="1" shape-rendering="crispEdges"/><polygon points="1051.6,633.2 1210.0,633.2 1225.2,632.8 1233.3,631.0 1240.4,629.5 1245.4,627.0 1249.5,621.4 1253.5,615.8 1256.6,625.4 1259.6,613.8 1261.6,619.9 1263.2,612.8 1266.2,621.9 1268.7,602.7 1271.1,595.6 1273.3,602.7 1274.8,606.7 1277.3,613.8 1279.9,606.2 1282.4,618.9 1284.9,625.4 1288.0,620.9 1291.0,611.8 1293.0,621.9 1295.6,609.7 1297.3,619.9 1299.1,590.5 1299.9,567.7 1301.1,567.7 1302.1,602.7 1304.2,596.6 1306.2,610.8 1307.7,594.6 1309.2,606.7 1311.3,612.8 1315.3,616.8 1318.8,612.8 1320.9,590.5 1321.9,582.4 1323.9,596.6 1325.4,608.7 1327.5,604.7 1329.0,615.8 1330.5,590.5 1332.0,580.4 1334.0,592.5 1335.6,594.6 1338.1,617.8 1340.6,614.8 1343.7,600.6 1345.2,596.6 1346.7,613.8 1347.9,580.4 1348.7,563.2 1349.9,570.3 1352.8,599.6 1354.3,576.8 1355.3,576.8 1356.8,602.7 1358.8,622.9 1361.4,631.0 1364.4,633.0 1364.4,633.5 1051.6,633.5" fill="#96D98D" fill-opacity="0.1"/><polyline points="1051.6,633.2 1210.0,633.2 1225.2,632.8 1233.3,631.0 1240.4,629.5 1245.4,627.0 1249.5,621.4 1253.5,615.8 1256.6,625.4 1259.6,613.8 1261.6,619.9 1263.2,612.8 1266.2,621.9 1268.7,602.7 1271.1,595.6 1273.3,602.7 1274.8,606.7 1277.3,613.8 1279.9,606.2 1282.4,618.9 1284.9,625.4 1288.0,620.9 1291.0,611.8 1293.0,621.9 1295.6,609.7 1297.3,619.9 1299.1,590.5 1299.9,567.7 1301.1,567.7 1302.1,602.7 1304.2,596.6 1306.2,610.8 1307.7,594.6 1309.2,606.7 1311.3,612.8 1315.3,616.8 1318.8,612.8 1320.9,590.5 1321.9,582.4 1323.9,596.6 1325.4,608.7 1327.5,604.7 1329.0,615.8 1330.5,590.5 1332.0,580.4 1334.0,592.5 1335.6,594.6 1338.1,617.8 1340.6,614.8 1343.7,600.6 1345.2,596.6 1346.7,613.8 1347.9,580.4 1348.7,563.2 1349.9,570.3 1352.8,599.6 1354.3,576.8 1355.3,576.8 1356.8,602.7 1358.8,622.9 1361.4,631.0 1364.4,633.0" fill="none" stroke="#96D98D" stroke-width="2" stroke-linejoin="round"/><polyline points="1051.6,611.0 1105.0,612.2 1160.0,613.2 1210.0,614.0 1225.2,613.3 1242.4,611.8 1250.5,609.2 1260.6,606.7 1270.8,604.2 1278.9,602.5 1289.0,602.7 1301.1,601.4 1311.3,600.1 1321.4,600.1 1331.5,599.1 1341.6,598.6 1351.8,597.4 1358.8,597.1 1361.9,599.1 1364.4,600.4" fill="none" stroke="#cb2a17" stroke-width="2" stroke-linejoin="round"/><rect x="850.9" y="538" width="14.2" height="4" fill="#96D98D"/><rect x="850.9" y="559.2" width="14.2" height="4" fill="#cb2a17"/><rect x="1769.0" y="538" width="14.2" height="4" fill="#96D98D"/><rect x="1769.0" y="559.2" width="14.2" height="4" fill="#cb2a17"/><line x1="1289.9" x2="1869.0" y1="719.5" y2="719.5" stroke="#c8c8c8" stroke-opacity="0.22" stroke-width="1" shape-rendering="crispEdges"/><line x1="1289.9" x2="1869.0" y1="751.5" y2="751.5" stroke="#c8c8c8" stroke-opacity="0.22" stroke-width="1" shape-rendering="crispEdges"/><line x1="1289.9" x2="1869.0" y1="784.5" y2="784.5" stroke="#c8c8c8" stroke-opacity="0.22" stroke-width="1" shape-rendering="crispEdges"/><line x1="1289.9" x2="1869.0" y1="816.5" y2="816.5" stroke="#c8c8c8" stroke-opacity="0.22" stroke-width="1" shape-rendering="crispEdges"/><line x1="1352.5" x2="1352.5" y1="719.1" y2="816.8" stroke="#c8c8c8" stroke-opacity="0.22" stroke-width="1" shape-rendering="crispEdges"/><line x1="1435.5" x2="1435.5" y1="719.1" y2="816.8" stroke="#c8c8c8" stroke-opacity="0.22" stroke-width="1" shape-rendering="crispEdges"/><line x1="1518.5" x2="1518.5" y1="719.1" y2="816.8" stroke="#c8c8c8" stroke-opacity="0.22" stroke-width="1" shape-rendering="crispEdges"/><line x1="1601.5" x2="1601.5" y1="719.1" y2="816.8" stroke="#c8c8c8" stroke-opacity="0.22" stroke-width="1" shape-rendering="crispEdges"/><line x1="1684.5" x2="1684.5" y1="719.1" y2="816.8" stroke="#c8c8c8" stroke-opacity="0.22" stroke-width="1" shape-rendering="crispEdges"/><line x1="1766.5" x2="1766.5" y1="719.1" y2="816.8" stroke="#c8c8c8" stroke-opacity="0.22" stroke-width="1" shape-rendering="crispEdges"/><line x1="1849.5" x2="1849.5" y1="719.1" y2="816.8" stroke="#c8c8c8" stroke-opacity="0.22" stroke-width="1" shape-rendering="crispEdges"/><rect x="1289.9" y="765.1" width="11.1" height="51.7" fill="#EAB839"/><rect x="1314.9" y="790.6" width="27.8" height="26.2" fill="#EAB839"/><rect x="1355.9" y="768.7" width="28.0" height="48.1" fill="#EAB839"/><rect x="1397.3" y="770.1" width="27.8" height="46.7" fill="#EAB839"/><rect x="1438.9" y="783.3" width="27.8" height="33.5" fill="#EAB839"/><rect x="1480.3" y="769.9" width="27.8" height="46.9" fill="#EAB839"/><rect x="1521.5" y="761.0" width="27.8" height="55.8" fill="#EAB839"/><rect x="1563.0" y="753.2" width="27.8" height="63.6" fill="#EAB839"/><rect x="1604.5" y="767.2" width="27.8" height="49.6" fill="#EAB839"/><rect x="1645.9" y="746.5" width="27.8" height="70.3" fill="#EAB839"/><rect x="1687.4" y="733.5" width="27.8" height="83.3" fill="#EAB839"/><rect x="1728.8" y="753.2" width="27.8" height="63.6" fill="#EAB839"/><rect x="1770.3" y="763.5" width="27.8" height="53.3" fill="#EAB839"/><rect x="1811.7" y="752.4" width="27.8" height="64.4" fill="#EAB839"/><rect x="1853.2" y="792.1" width="15.8" height="24.7" fill="#EAB839"/></svg><div class="txtlayer"><span class="t" style="left:91.80px;top:12.46px;font-size:18px;color:#d8d9da;letter-spacing:0.071px;">15060bmv721250100</span><span class="t" style="left:1690.23px;top:13.45px;font-size:14px;color:#a6a9ae;letter-spacing:-0.377px;-webkit-text-stroke:0.65px #a6a9ae;">Today</span><span class="t" style="left:1845.17px;top:14.80px;font-size:13px;color:#eb7b18;letter-spacing:0.995px;-webkit-text-stroke:0.75px #eb7b18;">30s</span><span class="t" style="left:120.12px;top:73.15px;font-size:14px;color:#d8d9da;letter-spacing:0.100px;-webkit-text-stroke:0.65px #d8d9da;">Batteriespannung</span><span class="t" style="left:314.82px;top:73.15px;font-size:14px;color:#d8d9da;letter-spacing:0.247px;-webkit-text-stroke:0.65px #d8d9da;">Batteriefüllstand</span><span class="t" style="left:498.98px;top:73.15px;font-size:14px;color:#d8d9da;letter-spacing:0.153px;-webkit-text-stroke:0.65px #d8d9da;">Batterietemperatur</span><span class="t" style="left:706.38px;top:73.15px;font-size:14px;color:#d8d9da;letter-spacing:0.250px;-webkit-text-stroke:0.65px #d8d9da;">Batteriestrom</span><span class="t" style="left:886.38px;top:73.15px;font-size:14px;color:#d8d9da;letter-spacing:-0.062px;-webkit-text-stroke:0.65px #d8d9da;">Leistung Regler 1</span><span class="t" style="left:1086.17px;top:73.15px;font-size:14px;color:#d8d9da;letter-spacing:-0.231px;-webkit-text-stroke:0.65px #d8d9da;">PV-Spannung1</span><span class="t" style="left:1261.67px;top:73.15px;font-size:14px;color:#d8d9da;letter-spacing:-0.396px;-webkit-text-stroke:0.65px #d8d9da;">Regler1</span><span class="t" style="left:1421.53px;top:73.15px;font-size:14px;color:#d8d9da;letter-spacing:-0.018px;-webkit-text-stroke:0.65px #d8d9da;">Leistung Regler 2</span><span class="t" style="left:1621.17px;top:73.15px;font-size:14px;color:#d8d9da;letter-spacing:-0.140px;-webkit-text-stroke:0.65px #d8d9da;">PV-Spannung2</span><span class="t" style="left:1796.47px;top:73.15px;font-size:14px;color:#d8d9da;letter-spacing:-0.163px;-webkit-text-stroke:0.65px #d8d9da;">Regler2</span><span class="t" style="left:368.93px;top:225.15px;font-size:14px;color:#d8d9da;letter-spacing:0.205px;-webkit-text-stroke:0.65px #d8d9da;">Temperatur</span><span class="t" style="left:967.73px;top:225.15px;font-size:14px;color:#d8d9da;letter-spacing:0.325px;-webkit-text-stroke:0.65px #d8d9da;">Luftfeuchtigkeit</span><span class="t" style="left:1560.62px;top:225.15px;font-size:14px;color:#d8d9da;letter-spacing:0.395px;-webkit-text-stroke:0.65px #d8d9da;">Luftdruck</span><span class="t" style="left:415.98px;top:491.15px;font-size:14px;color:#d8d9da;letter-spacing:0.017px;-webkit-text-stroke:0.65px #d8d9da;">Leistung und Temperatur Regler1</span><span class="t" style="left:1333.62px;top:491.15px;font-size:14px;color:#d8d9da;letter-spacing:0.040px;-webkit-text-stroke:0.65px #d8d9da;">Leistung und Temperatur Regler2</span><span class="t" style="left:467.52px;top:681.15px;font-size:14px;color:#d8d9da;letter-spacing:-0.060px;-webkit-text-stroke:0.65px #d8d9da;">Leistung Regler1</span><span class="t" style="left:926.27px;top:681.15px;font-size:14px;color:#d8d9da;letter-spacing:-0.027px;-webkit-text-stroke:0.65px #d8d9da;">Leistung Regler2</span><span class="t" style="left:1509.03px;top:681.15px;font-size:14px;color:#d8d9da;letter-spacing:0.153px;-webkit-text-stroke:0.65px #d8d9da;">Tagesleistung</span><span class="t" style="left:1066.5px;top:68.1px;font-size:13px;font-weight:700;color:#b4b5b9;font-family:'Liberation Serif',serif">i</span><span class="t" style="left:1602.0px;top:68.1px;font-size:13px;font-weight:700;color:#b4b5b9;font-family:'Liberation Serif',serif">i</span><span class="t" style="left:16.3px;top:859.7px;font-size:12.5px;font-weight:700;color:#b5b8be">?</span><span class="t" style="left:154.47px;top:168.60px;font-size:12.4px;color:#d8d9da;letter-spacing:0.034px;-webkit-text-stroke:0.65px #d8d9da;">26.71 V</span><span class="t" style="left:337.65px;top:167.71px;font-size:17px;color:#73BF69;letter-spacing:0.289px;-webkit-text-stroke:0.7px #73BF69;">83.13%</span><span class="t" style="left:919.08px;top:168.60px;font-size:12.4px;color:#d8d9da;letter-spacing:0.215px;-webkit-text-stroke:0.65px #d8d9da;">0.500 A</span><span class="t" style="left:1103.70px;top:164.45px;font-size:29px;color:#73BF69;letter-spacing:0.052px;font-weight:700;">61.3</span><span class="t" style="left:1454.58px;top:168.60px;font-size:12.4px;color:#d8d9da;letter-spacing:0.215px;-webkit-text-stroke:0.65px #d8d9da;">0.700 A</span><span class="t" style="left:1638.05px;top:164.45px;font-size:29px;color:#73BF69;letter-spacing:0.286px;font-weight:700;">71.9</span><span class="t" style="left:479.10px;top:121.93px;font-size:57.5px;color:#73BF69;letter-spacing:0.196px;font-weight:700;">14.9</span><span class="t" style="left:604.00px;top:142.12px;font-size:34px;color:#73BF69;letter-spacing:-3.251px;font-weight:700;">°C</span><span class="t" style="left:699.70px;top:129.98px;font-size:43.5px;color:#5794F2;letter-spacing:0.148px;font-weight:700;">-4.5</span><span class="t" style="left:782.00px;top:144.79px;font-size:26px;color:#5794F2;font-weight:700;">A</span><span class="t" style="left:1234.10px;top:141.65px;font-size:19.2px;color:#EAB839;letter-spacing:-0.075px;-webkit-text-stroke:0.9px #EAB839;">Nachladung</span><span class="t" style="left:1769.60px;top:141.65px;font-size:19.2px;color:#EAB839;letter-spacing:-0.075px;-webkit-text-stroke:0.9px #EAB839;">Nachladung</span><span class="t" style="left:99.20px;top:682.77px;font-size:28.5px;color:#d8d9da;letter-spacing:1.040px;-webkit-text-stroke:1.0px #d8d9da;">29.04.2021</span><span class="t" style="left:85.02px;top:256.74px;font-size:12px;color:#cbd3db;letter-spacing:-0.549px;-webkit-text-stroke:0.25px #cbd3db;">20 °C</span><span class="t" style="left:74.92px;top:291.54px;font-size:12px;color:#cbd3db;letter-spacing:-0.351px;-webkit-text-stroke:0.25px #cbd3db;">17.5 °C</span><span class="t" style="left:85.02px;top:326.34px;font-size:12px;color:#cbd3db;letter-spacing:-0.549px;-webkit-text-stroke:0.25px #cbd3db;">15 °C</span><span class="t" style="left:74.92px;top:361.14px;font-size:12px;color:#cbd3db;letter-spacing:-0.351px;-webkit-text-stroke:0.25px #cbd3db;">12.5 °C</span><span class="t" style="left:85.02px;top:395.94px;font-size:12px;color:#cbd3db;letter-spacing:-0.549px;-webkit-text-stroke:0.25px #cbd3db;">10 °C</span><span class="t" style="left:74.92px;top:430.74px;font-size:12px;color:#cbd3db;letter-spacing:-0.351px;-webkit-text-stroke:0.25px #cbd3db;">7.50 °C</span><span class="t" style="left:103.72px;top:446.04px;font-size:12px;color:#cbd3db;letter-spacing:-0.120px;-webkit-text-stroke:0.25px #cbd3db;">00:00</span><span class="t" style="left:204.12px;top:446.04px;font-size:12px;color:#cbd3db;letter-spacing:-0.120px;-webkit-text-stroke:0.25px #cbd3db;">04:00</span><span class="t" style="left:304.53px;top:446.04px;font-size:12px;color:#cbd3db;letter-spacing:-0.120px;-webkit-text-stroke:0.25px #cbd3db;">08:00</span><span class="t" style="left:404.93px;top:446.04px;font-size:12px;color:#cbd3db;letter-spacing:-0.120px;-webkit-text-stroke:0.25px #cbd3db;">12:00</span><span class="t" style="left:505.33px;top:446.04px;font-size:12px;color:#cbd3db;letter-spacing:-0.120px;-webkit-text-stroke:0.25px #cbd3db;">16:00</span><span class="t" style="left:605.73px;top:446.04px;font-size:12px;color:#cbd3db;letter-spacing:-0.120px;-webkit-text-stroke:0.25px #cbd3db;">20:00</span><span class="t" style="left:764.62px;top:256.74px;font-size:12px;color:#cbd3db;letter-spacing:-0.917px;-webkit-text-stroke:0.25px #cbd3db;">85 %H</span><span class="t" style="left:764.62px;top:291.54px;font-size:12px;color:#cbd3db;letter-spacing:-0.917px;-webkit-text-stroke:0.25px #cbd3db;">80 %H</span><span class="t" style="left:764.62px;top:326.34px;font-size:12px;color:#cbd3db;letter-spacing:-0.917px;-webkit-text-stroke:0.25px #cbd3db;">75 %H</span><span class="t" style="left:764.62px;top:361.14px;font-size:12px;color:#cbd3db;letter-spacing:-0.917px;-webkit-text-stroke:0.25px #cbd3db;">70 %H</span><span class="t" style="left:764.62px;top:395.94px;font-size:12px;color:#cbd3db;letter-spacing:-0.917px;-webkit-text-stroke:0.25px #cbd3db;">65 %H</span><span class="t" style="left:764.62px;top:430.74px;font-size:12px;color:#cbd3db;letter-spacing:-0.917px;-webkit-text-stroke:0.25px #cbd3db;">60 %H</span><span class="t" style="left:787.52px;top:446.04px;font-size:12px;color:#cbd3db;letter-spacing:-0.120px;-webkit-text-stroke:0.25px #cbd3db;">00:00</span><span class="t" style="left:863.42px;top:446.04px;font-size:12px;color:#cbd3db;letter-spacing:-0.120px;-webkit-text-stroke:0.25px #cbd3db;">04:00</span><span class="t" style="left:939.32px;top:446.04px;font-size:12px;color:#cbd3db;letter-spacing:-0.120px;-webkit-text-stroke:0.25px #cbd3db;">08:00</span><span class="t" style="left:1015.23px;top:446.04px;font-size:12px;color:#cbd3db;letter-spacing:-0.120px;-webkit-text-stroke:0.25px #cbd3db;">12:00</span><span class="t" style="left:1091.12px;top:446.04px;font-size:12px;color:#cbd3db;letter-spacing:-0.120px;-webkit-text-stroke:0.25px #cbd3db;">16:00</span><span class="t" style="left:1167.02px;top:446.04px;font-size:12px;color:#cbd3db;letter-spacing:-0.120px;-webkit-text-stroke:0.25px #cbd3db;">20:00</span><span class="t" style="left:1299.23px;top:256.74px;font-size:12px;color:#cbd3db;letter-spacing:-0.360px;-webkit-text-stroke:0.25px #cbd3db;">993 hPa</span><span class="t" style="left:1299.23px;top:291.54px;font-size:12px;color:#cbd3db;letter-spacing:-0.360px;-webkit-text-stroke:0.25px #cbd3db;">992 hPa</span><span class="t" style="left:1299.23px;top:326.34px;font-size:12px;color:#cbd3db;letter-spacing:-0.360px;-webkit-text-stroke:0.25px #cbd3db;">991 hPa</span><span class="t" style="left:1299.23px;top:361.14px;font-size:12px;color:#cbd3db;letter-spacing:-0.360px;-webkit-text-stroke:0.25px #cbd3db;">990 hPa</span><span class="t" style="left:1299.23px;top:395.94px;font-size:12px;color:#cbd3db;letter-spacing:-0.360px;-webkit-text-stroke:0.25px #cbd3db;">989 hPa</span><span class="t" style="left:1299.23px;top:430.74px;font-size:12px;color:#cbd3db;letter-spacing:-0.360px;-webkit-text-stroke:0.25px #cbd3db;">988 hPa</span><span class="t" style="left:1332.52px;top:446.04px;font-size:12px;color:#cbd3db;letter-spacing:-0.120px;-webkit-text-stroke:0.25px #cbd3db;">00:00</span><span class="t" style="left:1418.82px;top:446.04px;font-size:12px;color:#cbd3db;letter-spacing:-0.120px;-webkit-text-stroke:0.25px #cbd3db;">04:00</span><span class="t" style="left:1505.82px;top:446.04px;font-size:12px;color:#cbd3db;letter-spacing:-0.120px;-webkit-text-stroke:0.25px #cbd3db;">08:00</span><span class="t" style="left:1592.82px;top:446.04px;font-size:12px;color:#cbd3db;letter-spacing:-0.120px;-webkit-text-stroke:0.25px #cbd3db;">12:00</span><span class="t" style="left:1679.82px;top:446.04px;font-size:12px;color:#cbd3db;letter-spacing:-0.120px;-webkit-text-stroke:0.25px #cbd3db;">16:00</span><span class="t" style="left:1766.82px;top:446.04px;font-size:12px;color:#cbd3db;letter-spacing:-0.120px;-webkit-text-stroke:0.25px #cbd3db;">20:00</span><span class="t" style="left:97.72px;top:522.84px;font-size:12px;color:#cbd3db;letter-spacing:-0.381px;-webkit-text-stroke:0.25px #cbd3db;">1 K</span><span class="t" style="left:95.02px;top:548.84px;font-size:12px;color:#cbd3db;letter-spacing:-0.036px;-webkit-text-stroke:0.25px #cbd3db;">750</span><span class="t" style="left:95.02px;top:574.84px;font-size:12px;color:#cbd3db;letter-spacing:-0.036px;-webkit-text-stroke:0.25px #cbd3db;">500</span><span class="t" style="left:95.02px;top:600.84px;font-size:12px;color:#cbd3db;letter-spacing:-0.036px;-webkit-text-stroke:0.25px #cbd3db;">250</span><span class="t" style="left:108.30px;top:626.84px;font-size:12px;color:#cbd3db;-webkit-text-stroke:0.25px #cbd3db;">0</span><span class="t" style="left:105.22px;top:641.74px;font-size:12px;color:#cbd3db;letter-spacing:-0.120px;-webkit-text-stroke:0.25px #cbd3db;">00:00</span><span class="t" style="left:215.32px;top:641.74px;font-size:12px;color:#cbd3db;letter-spacing:-0.120px;-webkit-text-stroke:0.25px #cbd3db;">04:00</span><span class="t" style="left:325.43px;top:641.74px;font-size:12px;color:#cbd3db;letter-spacing:-0.120px;-webkit-text-stroke:0.25px #cbd3db;">08:00</span><span class="t" style="left:435.52px;top:641.74px;font-size:12px;color:#cbd3db;letter-spacing:-0.120px;-webkit-text-stroke:0.25px #cbd3db;">12:00</span><span class="t" style="left:545.62px;top:641.74px;font-size:12px;color:#cbd3db;letter-spacing:-0.120px;-webkit-text-stroke:0.25px #cbd3db;">16:00</span><span class="t" style="left:655.73px;top:641.74px;font-size:12px;color:#cbd3db;letter-spacing:-0.120px;-webkit-text-stroke:0.25px #cbd3db;">20:00</span><span class="t" style="left:792.02px;top:529.74px;font-size:12px;color:#cbd3db;letter-spacing:-0.499px;-webkit-text-stroke:0.25px #cbd3db;">75 °C</span><span class="t" style="left:792.02px;top:561.84px;font-size:12px;color:#cbd3db;letter-spacing:-0.499px;-webkit-text-stroke:0.25px #cbd3db;">50 °C</span><span class="t" style="left:792.02px;top:594.34px;font-size:12px;color:#cbd3db;letter-spacing:-0.499px;-webkit-text-stroke:0.25px #cbd3db;">25 °C</span><span class="t" style="left:792.02px;top:626.94px;font-size:12px;color:#cbd3db;letter-spacing:-0.641px;-webkit-text-stroke:0.25px #cbd3db;">0 °C</span><span class="t" style="left:73.17px;top:577.34px;font-size:12px;color:#cbd3db;letter-spacing:0.342px;-webkit-text-stroke:0.25px #cbd3db;transform-origin:12.62px 10.16px;transform:rotate(-90deg);">Watt</span><span class="t" style="left:821.12px;top:577.34px;font-size:12px;color:#cbd3db;letter-spacing:-0.309px;-webkit-text-stroke:0.25px #cbd3db;transform-origin:12.88px 10.16px;transform:rotate(90deg);">Grad</span><span class="t" style="left:872.73px;top:530.84px;font-size:12px;color:#cbd3db;letter-spacing:0.073px;-webkit-text-stroke:0.25px #cbd3db;">Solarleistung</span><span class="t" style="left:872.73px;top:551.54px;font-size:12px;color:#cbd3db;letter-spacing:0.005px;-webkit-text-stroke:0.25px #cbd3db;">Reglertemperatur</span><span class="t" style="left:1012.72px;top:522.84px;font-size:12px;color:#cbd3db;letter-spacing:-0.189px;-webkit-text-stroke:0.25px #cbd3db;">1.50 K</span><span class="t" style="left:1029.22px;top:557.51px;font-size:12px;color:#cbd3db;letter-spacing:-0.381px;-webkit-text-stroke:0.25px #cbd3db;">1 K</span><span class="t" style="left:1026.52px;top:592.18px;font-size:12px;color:#cbd3db;letter-spacing:-0.036px;-webkit-text-stroke:0.25px #cbd3db;">500</span><span class="t" style="left:1039.80px;top:626.85px;font-size:12px;color:#cbd3db;-webkit-text-stroke:0.25px #cbd3db;">0</span><span class="t" style="left:1036.62px;top:641.74px;font-size:12px;color:#cbd3db;letter-spacing:-0.120px;-webkit-text-stroke:0.25px #cbd3db;">00:00</span><span class="t" style="left:1144.58px;top:641.74px;font-size:12px;color:#cbd3db;letter-spacing:-0.120px;-webkit-text-stroke:0.25px #cbd3db;">04:00</span><span class="t" style="left:1252.53px;top:641.74px;font-size:12px;color:#cbd3db;letter-spacing:-0.120px;-webkit-text-stroke:0.25px #cbd3db;">08:00</span><span class="t" style="left:1360.47px;top:641.74px;font-size:12px;color:#cbd3db;letter-spacing:-0.120px;-webkit-text-stroke:0.25px #cbd3db;">12:00</span><span class="t" style="left:1468.42px;top:641.74px;font-size:12px;color:#cbd3db;letter-spacing:-0.120px;-webkit-text-stroke:0.25px #cbd3db;">16:00</span><span class="t" style="left:1576.38px;top:641.74px;font-size:12px;color:#cbd3db;letter-spacing:-0.120px;-webkit-text-stroke:0.25px #cbd3db;">20:00</span><span class="t" style="left:1710.83px;top:529.84px;font-size:12px;color:#cbd3db;letter-spacing:-0.499px;-webkit-text-stroke:0.25px #cbd3db;">75 °C</span><span class="t" style="left:1710.83px;top:561.94px;font-size:12px;color:#cbd3db;letter-spacing:-0.499px;-webkit-text-stroke:0.25px #cbd3db;">50 °C</span><span class="t" style="left:1710.83px;top:594.44px;font-size:12px;color:#cbd3db;letter-spacing:-0.499px;-webkit-text-stroke:0.25px #cbd3db;">25 °C</span><span class="t" style="left:1710.83px;top:626.54px;font-size:12px;color:#cbd3db;letter-spacing:-0.641px;-webkit-text-stroke:0.25px #cbd3db;">0 °C</span><span class="t" style="left:990.98px;top:577.34px;font-size:12px;color:#cbd3db;letter-spacing:0.342px;-webkit-text-stroke:0.25px #cbd3db;transform-origin:12.62px 10.16px;transform:rotate(-90deg);">Watt</span><span class="t" style="left:1739.42px;top:577.34px;font-size:12px;color:#cbd3db;letter-spacing:-0.309px;-webkit-text-stroke:0.25px #cbd3db;transform-origin:12.88px 10.16px;transform:rotate(90deg);">Grad</span><span class="t" style="left:1790.53px;top:530.84px;font-size:12px;color:#cbd3db;letter-spacing:0.073px;-webkit-text-stroke:0.25px #cbd3db;">Solarleistung</span><span class="t" style="left:1790.53px;top:551.54px;font-size:12px;color:#cbd3db;letter-spacing:0.005px;-webkit-text-stroke:0.25px #cbd3db;">Reglertemperatur</span><span class="t" style="left:1243.22px;top:712.94px;font-size:12px;color:#cbd3db;letter-spacing:-0.378px;-webkit-text-stroke:0.25px #cbd3db;">6.0 kWh</span><span class="t" style="left:1243.22px;top:745.54px;font-size:12px;color:#cbd3db;letter-spacing:-0.378px;-webkit-text-stroke:0.25px #cbd3db;">4.0 kWh</span><span class="t" style="left:1243.22px;top:778.04px;font-size:12px;color:#cbd3db;letter-spacing:-0.378px;-webkit-text-stroke:0.25px #cbd3db;">2.0 kWh</span><span class="t" style="left:1258.72px;top:810.64px;font-size:12px;color:#cbd3db;letter-spacing:-0.586px;-webkit-text-stroke:0.25px #cbd3db;">0 Wh</span><span class="t" style="left:1336.62px;top:826.14px;font-size:12px;color:#cbd3db;letter-spacing:0.380px;-webkit-text-stroke:0.25px #cbd3db;">04/17</span><span class="t" style="left:1419.53px;top:826.14px;font-size:12px;color:#cbd3db;letter-spacing:0.380px;-webkit-text-stroke:0.25px #cbd3db;">04/19</span><span class="t" style="left:1502.42px;top:826.14px;font-size:12px;color:#cbd3db;letter-spacing:0.380px;-webkit-text-stroke:0.25px #cbd3db;">04/21</span><span class="t" style="left:1585.33px;top:826.14px;font-size:12px;color:#cbd3db;letter-spacing:0.380px;-webkit-text-stroke:0.25px #cbd3db;">04/23</span><span class="t" style="left:1668.22px;top:826.14px;font-size:12px;color:#cbd3db;letter-spacing:0.380px;-webkit-text-stroke:0.25px #cbd3db;">04/25</span><span class="t" style="left:1751.12px;top:826.14px;font-size:12px;color:#cbd3db;letter-spacing:0.380px;-webkit-text-stroke:0.25px #cbd3db;">04/27</span><span class="t" style="left:1834.03px;top:826.14px;font-size:12px;color:#cbd3db;letter-spacing:0.380px;-webkit-text-stroke:0.25px #cbd3db;">04/29</span><span class="t" style="left:1215.08px;top:764.54px;font-size:12px;color:#cbd3db;letter-spacing:-0.026px;-webkit-text-stroke:0.25px #cbd3db;transform-origin:19.83px 10.16px;transform:rotate(-90deg);">pro Tag</span><span class="t" style="left:1814.73px;top:682.04px;font-size:12px;color:#33a2e5;letter-spacing:0.028px;-webkit-text-stroke:0.65px #33a2e5;">Last 2 weeks</span><span class="t" style="left:301.70px;top:711.15px;font-size:14px;color:#3f99de;letter-spacing:0.014px;">Field</span><span class="t" style="left:686.70px;top:711.15px;font-size:14px;color:#3f99de;letter-spacing:0.066px;">Summe</span><span class="t" style="left:301.82px;top:745.15px;font-size:14px;color:#d8d9da;letter-spacing:-0.097px;-webkit-text-stroke:0.25px #d8d9da;">Regler1 Tagesertrag in Wh</span><span class="t" style="left:301.82px;top:779.75px;font-size:14px;color:#d8d9da;letter-spacing:0.011px;-webkit-text-stroke:0.25px #d8d9da;">Spitzenleistung Heute in Watt</span><span class="t" style="left:693.04px;top:745.35px;font-size:14px;color:#fdeeee;-webkit-text-stroke:0.4px #fdeeee;">770</span><span class="t" style="left:693.04px;top:780.05px;font-size:14px;color:#fdeeee;-webkit-text-stroke:0.4px #fdeeee;">864</span><span class="t" style="left:760.70px;top:711.15px;font-size:14px;color:#3f99de;letter-spacing:0.014px;">Field</span><span class="t" style="left:1145.70px;top:711.15px;font-size:14px;color:#3f99de;letter-spacing:0.066px;">Summe</span><span class="t" style="left:760.83px;top:745.15px;font-size:14px;color:#d8d9da;letter-spacing:-0.097px;-webkit-text-stroke:0.25px #d8d9da;">Regler1 Tagesertrag in Wh</span><span class="t" style="left:760.83px;top:779.75px;font-size:14px;color:#d8d9da;letter-spacing:0.011px;-webkit-text-stroke:0.25px #d8d9da;">Spitzenleistung Heute in Watt</span><span class="t" style="left:1144.26px;top:745.35px;font-size:14px;color:#fdeeee;-webkit-text-stroke:0.4px #fdeeee;">1550</span><span class="t" style="left:1144.26px;top:780.05px;font-size:14px;color:#fdeeee;-webkit-text-stroke:0.4px #fdeeee;">1093</span></div></body></html>
